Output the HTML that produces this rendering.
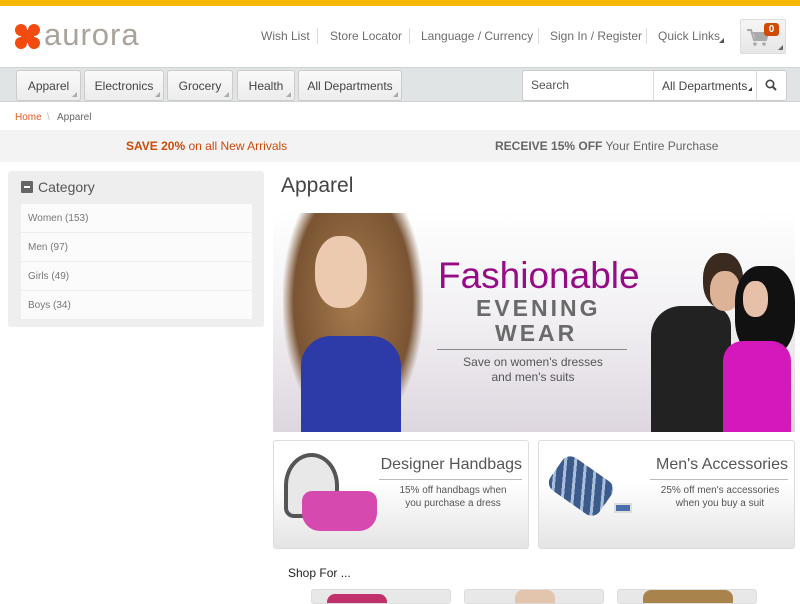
<!DOCTYPE html>
<html><head><meta charset="utf-8"><style>
*{margin:0;padding:0;box-sizing:border-box}
body{width:800px;height:600px;overflow:hidden;background:#fff;font-family:"Liberation Sans",Arial,sans-serif;position:relative}
.a{position:absolute}
.top{left:0;top:0;width:800px;height:6px;background:#f6b800}
.logo{left:15px;top:24px}
.logotext{left:44px;top:17px;font-size:31px;color:#a9a39c;letter-spacing:1px}
.links{top:29px;font-size:12px;color:#6d6d6d}
.sep{top:28px;width:1px;height:16px;background:#ddd}
.cart{left:740px;top:19px;width:46px;height:35px;border:1px solid #ddd;border-radius:2px;background:linear-gradient(#f5f5f5,#e6e6e6)}
.badge{left:764px;top:23px;width:15px;height:13px;background:#d04a02;border-radius:3px;color:#fff;font-size:10px;font-weight:bold;text-align:center;line-height:13px}
.nav{left:0;top:67px;width:800px;height:35px;background:#e1e4e5;border-top:1px solid #cfd3d4;border-bottom:1px solid #cfd3d4}
.tab{top:70px;height:31px;border:1px solid #ccc;border-radius:3px;background:linear-gradient(#fafafa,#ececec);font-size:12px;color:#444;text-align:center;line-height:30px}
.tab:after{content:"";position:absolute;right:3px;bottom:3px;border-left:5px solid transparent;border-bottom:5px solid #aaa}
.search{left:522px;top:70px;width:265px;height:31px;background:#fff;border:1px solid #ccc;border-radius:3px}
.bc{top:112px;font-size:10px}
.promo{left:0;top:130px;width:800px;height:32px;background:#f3f3f3;font-size:12px;line-height:32px}
.side{left:8px;top:171px;width:256px;height:156px;background:#eee;border-radius:3px}
.cat{left:21px;width:231px;height:28px;background:#fbfbfb;font-size:10px;color:#777;padding-left:7px;line-height:30px}
.box{top:440px;height:109px;border:1px solid #ddd;border-radius:3px;background:linear-gradient(#fff 40%,#e4e4e4);overflow:hidden}
.box h3{position:absolute;font-weight:normal;font-size:16px;color:#555;top:15px;right:6px}
.box .ln{position:absolute;height:1px;background:#bbb;top:38px;right:6px}
.box p{position:absolute;font-size:10px;color:#555;text-align:center;top:43px;line-height:13px}
.thumb{top:589px;width:140px;height:15px;border:1px solid #ddd;border-radius:3px;background:#e8e8e8;overflow:hidden}
</style></head><body>
<div class="a top"></div>
<svg class="a logo" width="25" height="25" viewBox="0 0 25 25"><g fill="#f24b10"><circle cx="6" cy="6" r="6"/><circle cx="19" cy="6" r="6"/><circle cx="6" cy="19" r="6"/><circle cx="19" cy="19" r="6"/><rect x="6" y="6" width="13" height="13"/></g></svg>
<div class="a logotext">aurora</div>
<div class="a links" style="left:261px">Wish List</div>
<div class="a sep" style="left:317px"></div>
<div class="a links" style="left:330px">Store Locator</div>
<div class="a sep" style="left:409px"></div>
<div class="a links" style="left:421px">Language / Currency</div>
<div class="a sep" style="left:538px"></div>
<div class="a links" style="left:550px">Sign In / Register</div>
<div class="a sep" style="left:646px"></div>
<div class="a links" style="left:658px">Quick Links</div>
<div class="a" style="left:719px;top:38px;border-left:5px solid transparent;border-bottom:5px solid #555"></div>
<div class="a cart"></div>
<svg class="a" style="left:746px;top:28px" width="24" height="20" viewBox="0 0 24 20"><path d="M1 2h4l3 10h12l2-7H7" fill="none" stroke="#aaa" stroke-width="2"/><path d="M8 6h13l-2 6H9z" fill="#aaa"/><circle cx="9" cy="16" r="1.8" fill="#aaa"/><circle cx="18" cy="16" r="1.8" fill="#aaa"/></svg>
<div class="a badge">0</div>
<div class="a" style="left:778px;top:45px;border-left:5px solid transparent;border-bottom:5px solid #666"></div>
<div class="a nav"></div>
<div class="a tab" style="left:16px;width:65px">Apparel</div>
<div class="a tab" style="left:84px;width:80px">Electronics</div>
<div class="a tab" style="left:167px;width:66px">Grocery</div>
<div class="a tab" style="left:237px;width:58px">Health</div>
<div class="a tab" style="left:298px;width:104px">All Departments</div>
<div class="a search"></div>
<div class="a" style="left:531px;top:78px;font-size:12px;color:#555">Search</div>
<div class="a" style="left:653px;top:71px;width:1px;height:29px;background:#ddd"></div>
<div class="a" style="left:662px;top:79px;font-size:12px;color:#444">All Departments</div>
<div class="a" style="left:748px;top:87px;border-left:4px solid transparent;border-bottom:4px solid #333"></div>
<div class="a" style="left:756px;top:71px;width:1px;height:29px;background:#ddd"></div>
<svg class="a" style="left:765px;top:79px" width="12" height="12" viewBox="0 0 12 12"><circle cx="5" cy="5" r="3.7" fill="none" stroke="#444" stroke-width="1.6"/><path d="M8 8l3 3" stroke="#444" stroke-width="2"/></svg>
<div class="a bc" style="left:15px;color:#e05a1a">Home</div>
<div class="a bc" style="left:47px;color:#bbb">\</div>
<div class="a bc" style="left:57px;color:#666">Apparel</div>
<div class="a promo"></div>
<div class="a" style="left:126px;top:139px;font-size:12px;color:#cc4a0a"><b>SAVE 20%</b> on all New Arrivals</div>
<div class="a" style="left:495px;top:139px;font-size:12px;color:#666"><b>RECEIVE 15% OFF</b> Your Entire Purchase</div>
<div class="a side"></div>
<div class="a" style="left:21px;top:181px;width:12px;height:12px;background:#666;border-radius:1px"></div>
<div class="a" style="left:24px;top:186px;width:6px;height:2px;background:#fff"></div>
<div class="a" style="left:38px;top:179px;font-size:14px;color:#555">Category</div>
<div class="a cat" style="top:204px">Women (153)</div>
<div class="a cat" style="top:233px">Men (97)</div>
<div class="a cat" style="top:262px">Girls (49)</div>
<div class="a cat" style="top:291px">Boys (34)</div>
<div class="a" style="left:281px;top:174px;font-size:21px;color:#444">Apparel</div>
<div class="a" style="left:273px;top:211px;width:522px;height:221px;background:linear-gradient(#fff 0%,#f1eff2 50%,#ddd6df 100%);overflow:hidden">
  <div class="a" style="left:10px;top:2px;width:140px;height:220px;background:radial-gradient(ellipse at 50% 40%,#a67b4e 0%,#7a5433 60%,transparent 72%)"></div>
  <div class="a" style="left:42px;top:25px;width:52px;height:72px;background:#eccab0;border-radius:45%"></div>
  <div class="a" style="left:28px;top:125px;width:100px;height:100px;background:#2c3ba8;border-radius:30px 30px 0 0"></div>
  <div class="a" style="left:165px;top:44px;font-size:37px;color:#950c86">Fashionable</div>
  <div class="a" style="left:203px;top:84px;font-size:23px;font-weight:bold;letter-spacing:3px;color:#6a6a6a">EVENING</div>
  <div class="a" style="left:222px;top:109px;font-size:23px;font-weight:bold;letter-spacing:3px;color:#6a6a6a">WEAR</div>
  <div class="a" style="left:164px;top:138px;width:190px;height:1px;background:#888"></div>
  <div class="a" style="left:165px;top:144px;width:190px;text-align:center;font-size:12px;line-height:15px;color:#555">Save on women's dresses<br>and men's suits</div>
  <div class="a" style="left:378px;top:95px;width:80px;height:130px;background:#222;border-radius:30px 20px 0 0"></div>
  <div class="a" style="left:430px;top:42px;width:40px;height:55px;background:#3a2a20;border-radius:45%"></div>
  <div class="a" style="left:437px;top:60px;width:30px;height:40px;background:#ddb397;border-radius:45%"></div>
  <div class="a" style="left:462px;top:55px;width:60px;height:90px;background:#111;border-radius:40%"></div>
  <div class="a" style="left:470px;top:70px;width:25px;height:36px;background:#e7c0aa;border-radius:45%"></div>
  <div class="a" style="left:450px;top:130px;width:68px;height:95px;background:#d418b9;border-radius:20px 20px 0 0"></div>
</div>
<div class="a box" style="left:273px;width:256px">
  <div class="a" style="left:10px;top:12px;width:55px;height:65px;border:4px solid #555;border-radius:50% 50% 10px 10px;background:#e8e8e8"></div>
  <div class="a" style="left:28px;top:50px;width:75px;height:40px;background:#d64ab0;border-radius:10px 10px 18px 18px"></div>
  <h3>Designer Handbags</h3><div class="ln" style="width:143px"></div>
  <p style="left:110px;width:138px">15% off handbags when<br>you purchase a dress</p>
</div>
<div class="a box" style="left:538px;width:257px">
  <div class="a" style="left:12px;top:25px;width:60px;height:40px;background:repeating-linear-gradient(60deg,#3c5a8a 0 7px,#a9bfdc 7px 10px);transform:rotate(35deg);border-radius:10px"></div>
  <div class="a" style="left:75px;top:62px;width:18px;height:10px;background:#4a6ea8;border:2px solid #ddd"></div>
  <h3>Men's Accessories</h3><div class="ln" style="width:138px"></div>
  <p style="left:112px;width:138px">25% off men's accessories<br>when you buy a suit</p>
</div>
<div class="a" style="left:288px;top:566px;font-size:12px;color:#222">Shop For ...</div>
<div class="a thumb" style="left:311px"><div style="margin:4px 0 0 15px;width:60px;height:20px;background:#c0306a;border-radius:8px"></div></div>
<div class="a thumb" style="left:464px"><div style="margin:0 0 0 50px;width:40px;height:20px;background:#e3c5ad;border-radius:8px"></div></div>
<div class="a thumb" style="left:617px"><div style="margin:0 0 0 25px;width:90px;height:20px;background:#a8844c;border-radius:8px"></div></div>
</body></html>
